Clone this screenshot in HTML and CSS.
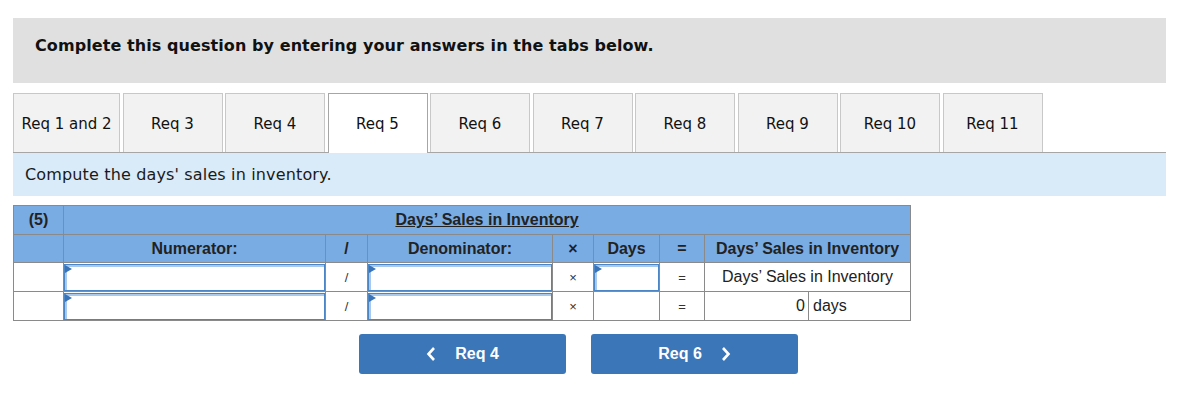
FILE: index.html
```html
<!DOCTYPE html>
<html>
<head>
<meta charset="utf-8">
<link rel="stylesheet" href="styles.css">
</head>
<body>
<div class="page">
  <div class="instructions">Complete this question by entering your answers in the tabs below.</div>
  <div class="tabs">
    <div class="tab tab-first">Req 1 and 2</div>
    <div class="tab">Req 3</div>
    <div class="tab">Req 4</div>
    <div class="tab active">Req 5</div>
    <div class="tab">Req 6</div>
    <div class="tab">Req 7</div>
    <div class="tab">Req 8</div>
    <div class="tab">Req 9</div>
    <div class="tab">Req 10</div>
    <div class="tab">Req 11</div>
  </div>
  <div class="prompt">Compute the days' sales in inventory.</div>
  <table class="grid">
    <colgroup>
      <col class="c-label"><col class="c-num"><col class="c-op"><col class="c-den"><col class="c-x"><col class="c-days"><col class="c-eq"><col class="c-r1"><col class="c-r2">
    </colgroup>
    <tr class="head">
      <td>(5)</td>
      <td colspan="8"><span class="title">Days’ Sales in Inventory</span></td>
    </tr>
    <tr class="head">
      <td></td>
      <td>Numerator:</td>
      <td>/</td>
      <td>Denominator:</td>
      <td>×</td>
      <td>Days</td>
      <td>=</td>
      <td colspan="2">Days’ Sales in Inventory</td>
    </tr>
    <tr class="body">
      <td></td>
      <td class="in"><div class="field"></div></td>
      <td class="op">/</td>
      <td class="in"><div class="field"></div></td>
      <td class="op">×</td>
      <td class="in"><div class="field"></div></td>
      <td class="op">=</td>
      <td colspan="2">Days’ Sales in Inventory</td>
    </tr>
    <tr class="body">
      <td></td>
      <td class="in"><div class="field"></div></td>
      <td class="op">/</td>
      <td class="in"><div class="field"></div></td>
      <td class="op">×</td>
      <td></td>
      <td class="op">=</td>
      <td class="num">0</td>
      <td class="unit">days</td>
    </tr>
  </table>
  <div class="nav">
    <button class="btn"><svg class="chev" width="10" height="16" viewBox="0 0 10 16"><polyline points="8,2 2.5,8 8,14" fill="none" stroke="#fff" stroke-width="2.6"/></svg><span>Req 4</span></button>
    <button class="btn"><span>Req 6</span><svg class="chev" width="10" height="16" viewBox="0 0 10 16"><polyline points="2,2 7.5,8 2,14" fill="none" stroke="#fff" stroke-width="2.6"/></svg></button>
  </div>
</div>
</body>
</html>
```
FILE: styles.css
```css
html, body {
  margin: 0;
  padding: 0;
  background: #ffffff;
}
body {
  font-family: "DejaVu Sans", Verdana, sans-serif;
  color: #1a1a1a;
}
.page {
  padding: 18px 17px 0 13px;
}
.instructions {
  background: #e0e0e0;
  height: 65px;
  box-sizing: border-box;
  padding: 18px 0 0 22px;
  font-weight: bold;
  font-size: 16px;
  letter-spacing: 0.08px;
  color: #111;
}
.tabs {
  display: flex;
  gap: 2.5px;
  margin-top: 10px;
  border-bottom: 1px solid #a6a6a6;
}
.tab {
  width: 100px;
  height: 59px;
  box-sizing: border-box;
  border: 1px solid #c8c8c8;
  border-bottom: none;
  background: #f2f2f2;
  display: flex;
  align-items: center;
  justify-content: center;
  font-family: "DejaVu Sans", Verdana, sans-serif;
  font-size: 15px;
  color: #111;
  padding-top: 1px;
}
.tab-first {
  width: 107px;
}
.tab.active {
  background: #ffffff;
  border-color: #a6a6a6;
  margin-bottom: -1px;
  height: 60px;
  padding-top: 0;
}
.prompt {
  background: #d9eaf8;
  height: 43px;
  box-sizing: border-box;
  padding: 12px 0 0 12px;
  font-size: 16px;
  letter-spacing: 0.15px;
  color: #1a1a1a;
}
.grid {
  margin-top: 9px;
  border-collapse: collapse;
  table-layout: fixed;
  width: 897px;
  font-family: "Liberation Sans", Arial, sans-serif;
  font-size: 16px;
  color: #222;
}
.c-label { width: 50px; }
.c-num { width: 262px; }
.c-op { width: 42px; }
.c-den { width: 185px; }
.c-x { width: 41px; }
.c-days { width: 66px; }
.c-eq { width: 45px; }
.c-r1 { width: 104px; }
.c-r2 { width: 102px; }
.grid td {
  border: 1px solid #8a8a8a;
  padding: 0 4px;
  text-align: center;
  height: 28px;
  box-sizing: border-box;
}
.head td {
  background: #79ace3;
  font-weight: bold;
}
.head:first-child td {
  height: 29px;
}
.title {
  text-decoration: underline;
}
.body td {
  height: 29px;
  background: #fff;
}
.body td.in {
  padding: 0;
}
.op {
  font-size: 13px;
  color: #333;
}
.field {
  position: relative;
  height: 27px;
  box-sizing: border-box;
  border: 1px solid #4a85c6;
  box-shadow: inset 2px 2px 0 #a9c9ec;
  background: #fff;
}
.field::before {
  content: "";
  position: absolute;
  left: 0;
  top: 0;
  border-left: 7px solid #3a74b8;
  border-top: 4px solid transparent;
  border-bottom: 4px solid transparent;
}
.body td.num {
  text-align: right;
  padding-right: 3px;
}
.body td.unit {
  text-align: left;
  padding-left: 4px;
}
.nav {
  display: flex;
  gap: 25px;
  margin-top: 13px;
  padding-left: 346px;
}
.btn {
  width: 207px;
  height: 40px;
  border: none;
  border-radius: 3px;
  background: #3b76b9;
  color: #fff;
  font-family: "Liberation Sans", Arial, sans-serif;
  font-size: 16px;
  font-weight: bold;
  display: flex;
  align-items: center;
  justify-content: center;
  gap: 19px;
  padding: 0;
}
.chev {
  display: block;
}
```
